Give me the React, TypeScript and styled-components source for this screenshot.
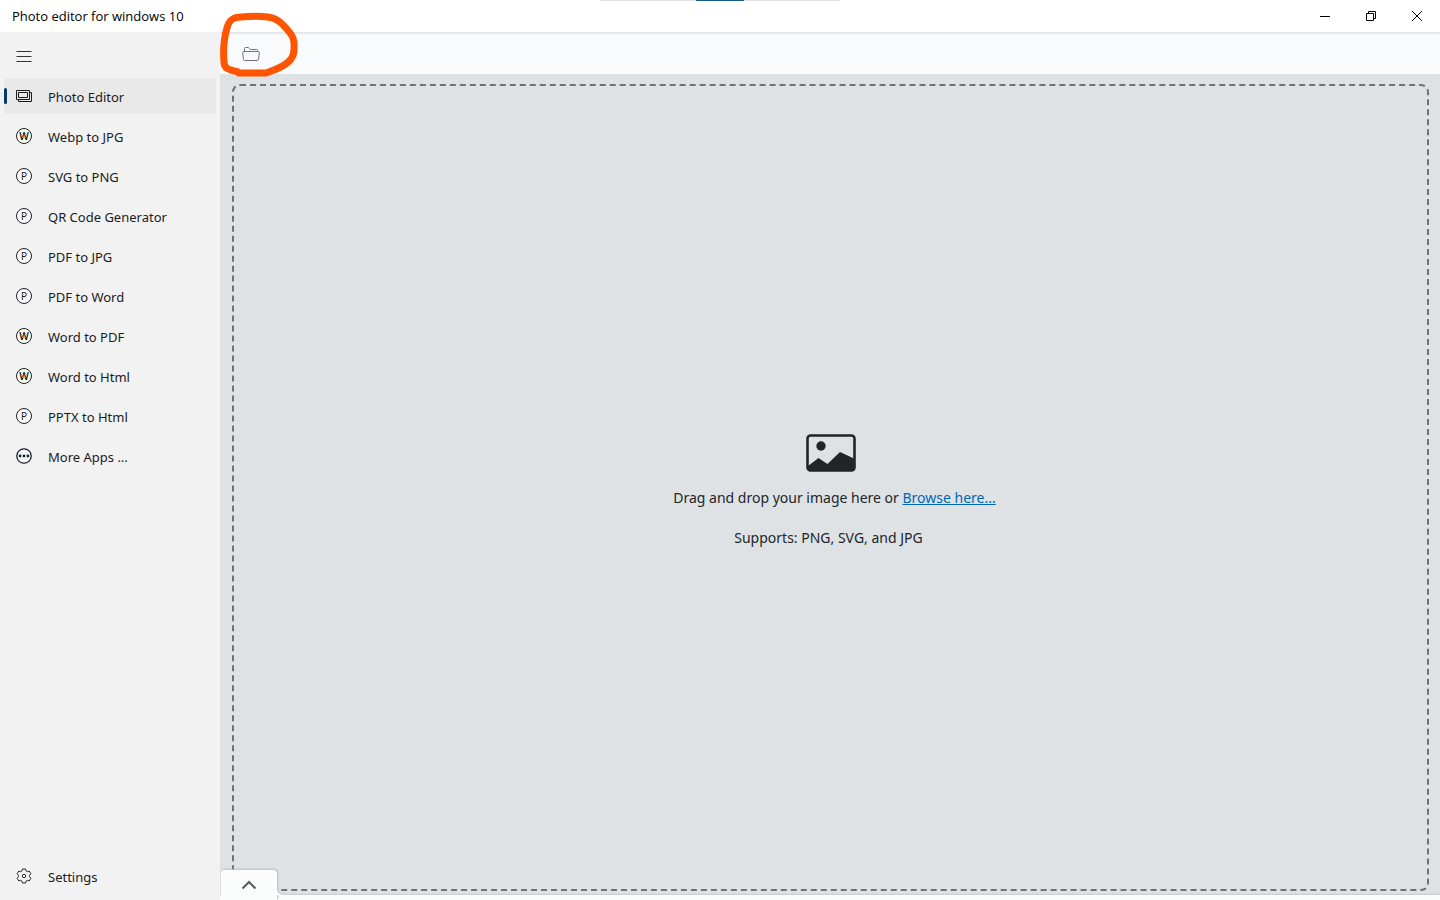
import React from "react";
import styled, { createGlobalStyle, css } from "styled-components";

const GlobalStyle = createGlobalStyle`
  *, *::before, *::after { box-sizing: border-box; }
  body {
    margin: 0;
    background: #ffffff;
    color: #1b1b1b;
    font-family: "Segoe UI", "Noto Sans", "Open Sans", sans-serif;
    font-size: 13px;
  }
  button { font: inherit; color: inherit; border: 0; padding: 0; background: transparent; cursor: pointer; }
  svg { display: block; }
`;

const Window = styled.div`
  position: relative;
  display: flex;
  flex-direction: column;
  min-height: 100vh;
`;

const TitleBar = styled.header`
  display: flex;
  align-items: center;
  justify-content: space-between;
  height: 32px;
  padding-left: 12px;
`;

const Title = styled.h1`
  margin: 0;
  font-family: "Segoe UI", "Open Sans", sans-serif;
  font-size: 13px;
  line-height: 16px;
  font-weight: 400;
  color: #000000;
`;

const WindowButtons = styled.div`
  display: flex;
`;

const WindowButton = styled.button`
  display: flex;
  align-items: center;
  justify-content: center;
  width: 46px;
  height: 32px;
`;

const DragHandle = styled.div`
  position: absolute;
  top: 0;
  left: 50%;
  width: 240px;
  height: 1px;
  margin-left: -120px;
  background: linear-gradient(90deg, #e4e4e4 96px, #145b8c 96px, #145b8c 144px, #e4e4e4 144px);
`;

const Body = styled.div`
  display: flex;
  flex: 1;
`;

const Sidebar = styled.nav`
  display: flex;
  flex-direction: column;
  flex: none;
  width: 220px;
  padding: 4px 4px 6px;
  background: #f2f2f2;
`;

const MenuButton = styled.button`
  display: flex;
  align-items: center;
  justify-content: center;
  width: 40px;
  height: 40px;
  margin-bottom: 2px;
`;

const NavList = styled.ul`
  display: flex;
  flex-direction: column;
  gap: 4px;
  margin: 0;
  padding: 0;
  list-style: none;
`;

const NavSpacer = styled.div`
  flex: 1;
`;

const NavButton = styled.button<{ $active?: boolean }>`
  position: relative;
  display: flex;
  align-items: center;
  gap: 16px;
  width: 100%;
  height: 36px;
  padding: 0 12px;
  border-radius: 4px;
  line-height: 20px;
  text-align: left;
  ${({ $active }) =>
    $active &&
    css`
      background: #e9e9e9;
      &::before {
        content: "";
        position: absolute;
        left: 0;
        top: 10px;
        width: 3px;
        height: 16px;
        border-radius: 2px;
        background: #003e6e;
      }
    `}
`;

const NavLabel = styled.span`
  padding-top: 2px;
`;

const NavIcon = styled.span`
  display: flex;
  align-items: center;
  justify-content: center;
  width: 16px;
  height: 16px;
`;

const LetterBadge = styled.span<{ $strong?: boolean }>`
  display: flex;
  align-items: center;
  justify-content: center;
  width: 16px;
  height: 16px;
  border: 1px solid #222222;
  border-radius: 50%;
  background: ${({ $strong }) => ($strong ? "#fbfbef" : "#fafafa")};
  font-size: 10px;
  line-height: 14px;
  font-weight: ${({ $strong }) => ($strong ? 600 : 400)};
`;

const Main = styled.main`
  position: relative;
  display: flex;
  flex-direction: column;
  flex: 1;
  min-width: 0;
  border-top: 2px solid #e6e8eb;
  border-bottom: 5px solid #fbfcfc;
`;

const Toolbar = styled.div`
  display: flex;
  align-items: center;
  height: 40px;
  padding-left: 20px;
  background: #f8fafc;
`;

const ToolButton = styled.button`
  display: flex;
  align-items: center;
  justify-content: center;
  width: 22px;
  height: 24px;
`;

const Canvas = styled.section`
  display: flex;
  flex: 1;
  padding: 10px 11px 4px 12px;
  background: #dee2e5;
  box-shadow: inset 0 -2px 2px -1px #c6cbcf;
`;

const DropZone = styled.div`
  display: flex;
  flex: 1;
  flex-direction: column;
  align-items: center;
  justify-content: center;
  padding-top: 8px;
  border: 2px dashed #6c7276;
  border-radius: 8px;
  color: #212529;
  font-size: 14px;
  line-height: 24px;
`;

const DropText = styled.p`
  margin: 14px 0 0;
  padding-left: 8px;
`;

const SupportText = styled.p`
  margin: 16px 4px 0 0;
`;

const BrowseLink = styled.a`
  color: #0067b8;
  text-decoration: underline;
`;

const PanelToggle = styled.button`
  position: absolute;
  left: 1px;
  bottom: -5px;
  display: flex;
  align-items: center;
  justify-content: center;
  width: 56px;
  height: 30px;
  border-radius: 4px 4px 0 0;
  background: #fbfcfc;
  box-shadow: 1px -1px 2px #b9bec2;

  &::after {
    content: "";
    position: absolute;
    left: 100%;
    bottom: 5px;
    width: 5px;
    height: 5px;
    background: radial-gradient(circle at top right, transparent 3px, #b9bec2 4px, #fbfcfc 5px);
  }
`;

const Annotation = styled.svg`
  position: absolute;
  left: 216px;
  top: 10px;
  pointer-events: none;
`;

const FramesIcon = () => (
  <svg width="16" height="16" viewBox="0 0 16 16" fill="none" stroke="#1b1b1b">
    <path d="M.5 2.500h13v9H.5zM2.500 4.500h9v5h-9zM13.500 4.500h2v9h-13v-2" />
  </svg>
);

const MoreIcon = () => (
  <svg width="16" height="16" viewBox="0 0 16 16" fill="none">
    <circle cx="8" cy="8" r="7.2" fill="#f8fbfd" stroke="#15212b" strokeWidth="1.3" />
    <circle cx="4.1" cy="8" r="1.4" fill="#15212b" />
    <circle cx="8" cy="8" r="1.4" fill="#15212b" />
    <circle cx="11.9" cy="8" r="1.4" fill="#15212b" />
  </svg>
);

const GearIcon = () => (
  <svg width="16" height="16" viewBox="0 0 16 16" fill="none" stroke="#2a2a2a" strokeLinejoin="round">
    <path d="M6.400 1h3.200l.5 2 1.200.7 2-.6 1.600 2.700-1.400 1.500v1.400l1.400 1.500-1.600 2.700-2-.6-1.200.7-.5 2H6.400l-.5-2-1.200-.7-2 .6-1.600-2.700 1.400-1.500V7.300L1.100 5.800l1.600-2.700 2 .6L5.900 3z" />
    <circle cx="8" cy="8" r="1.7" />
  </svg>
);

const MenuIcon = () => (
  <svg width="16" height="12" viewBox="0 0 16 12" stroke="#333333">
    <path d="M.5 1.500h15M.5 6.500h15M.5 11.500h15" />
  </svg>
);

const FolderIcon = () => (
  <svg width="18" height="16" viewBox="0 0 18 16" fill="none" stroke="#6b7482" strokeLinejoin="round">
    <path d="M2.500 6V2.500Q2.500 1.500 3.500 1.500H6.500L8.500 3.500H14.500Q15.500 3.500 15.500 4.500V6" />
    <path d="M2 5.500h14q1.400 0 1.300 1.300l-.7 6.400q-.2 1.300-1.500 1.300H2.900q-1.300 0-1.500-1.300L.7 6.800Q.6 5.500 2 5.500z" />
  </svg>
);

const PictureIcon = () => (
  <svg width="50" height="38" viewBox="0 0 50 38">
    <rect x="1.500" y="1.500" width="47" height="35" rx="3" fill="none" stroke="#212529" strokeWidth="2.600" />
    <circle cx="15" cy="12" r="4.700" fill="#212529" />
    <path d="M2 32L12.500 24L21.500 30L34 18L48 24.500V34Q48 36.500 45.500 36.500H4.500Q2 36.500 2 34z" fill="#212529" />
  </svg>
);

const CaretIcon = () => (
  <svg width="16" height="10" viewBox="0 0 16 10" fill="none" stroke="#5c6063" strokeWidth="2.200">
    <path d="M1.500 8.500L8 2L14.500 8.500" />
  </svg>
);

const MinimizeIcon = () => (
  <svg width="10" height="10" viewBox="0 0 10 10" stroke="#000">
    <path d="M0 5.500h10" />
  </svg>
);

const RestoreIcon = () => (
  <svg width="10" height="10" viewBox="0 0 10 10" fill="none" stroke="#000">
    <path d="M.5 2.500h7v7h-7zM2.500 2.500v-2h7v7h-2" />
  </svg>
);

const CloseIcon = () => (
  <svg width="10" height="10" viewBox="0 0 10 10" stroke="#000">
    <path d="M0 0L10 10M10 0L0 10" />
  </svg>
);

type IconKind = "frames" | "W" | "P" | "more" | "gear";

const items: { label: string; icon: IconKind }[] = [
  { label: "Photo Editor", icon: "frames" },
  { label: "Webp to JPG", icon: "W" },
  { label: "SVG to PNG", icon: "P" },
  { label: "QR Code Generator", icon: "P" },
  { label: "PDF to JPG", icon: "P" },
  { label: "PDF to Word", icon: "P" },
  { label: "Word to PDF", icon: "W" },
  { label: "Word to Html", icon: "W" },
  { label: "PPTX to Html", icon: "P" },
  { label: "More Apps ...", icon: "more" },
];

function renderIcon(kind: IconKind) {
  if (kind === "frames") return <FramesIcon />;
  if (kind === "more") return <MoreIcon />;
  if (kind === "gear") return <GearIcon />;
  return <LetterBadge $strong={kind === "W"}>{kind}</LetterBadge>;
}

function NavItem({ label, icon, active }: { label: string; icon: IconKind; active?: boolean }) {
  return (
    <li>
      <NavButton type="button" $active={active} aria-current={active ? "page" : undefined}>
        <NavIcon aria-hidden="true">{renderIcon(icon)}</NavIcon>
        <NavLabel>{label}</NavLabel>
      </NavButton>
    </li>
  );
}

export default function App() {
  return (
    <>
      <GlobalStyle />
      <Window>
        <DragHandle />
        <TitleBar>
          <Title>Photo editor for windows 10</Title>
          <WindowButtons>
            <WindowButton type="button" aria-label="Minimize"><MinimizeIcon /></WindowButton>
            <WindowButton type="button" aria-label="Restore"><RestoreIcon /></WindowButton>
            <WindowButton type="button" aria-label="Close"><CloseIcon /></WindowButton>
          </WindowButtons>
        </TitleBar>
        <Body>
          <Sidebar>
            <MenuButton type="button" aria-label="Toggle navigation"><MenuIcon /></MenuButton>
            <NavList>
              {items.map((item, index) => (
                <NavItem key={item.label} label={item.label} icon={item.icon} active={index === 0} />
              ))}
            </NavList>
            <NavSpacer />
            <NavList>
              <NavItem label="Settings" icon="gear" />
            </NavList>
          </Sidebar>
          <Main>
            <Toolbar>
              <ToolButton type="button" aria-label="Open file"><FolderIcon /></ToolButton>
            </Toolbar>
            <Canvas>
              <DropZone>
                <PictureIcon />
                <DropText>
                  Drag and drop your image here or <BrowseLink href="#browse">Browse here...</BrowseLink>
                </DropText>
                <SupportText>Supports: PNG, SVG, and JPG</SupportText>
              </DropZone>
            </Canvas>
            <PanelToggle type="button" aria-label="Show panel"><CaretIcon /></PanelToggle>
          </Main>
        </Body>
        <Annotation width="84" height="70" viewBox="216 10 84 70" fill="none" stroke="#ff5500" strokeWidth="7" strokeLinecap="round" strokeLinejoin="round" aria-hidden="true">
          <path d="M237 71.500C228 70 224 68 224 62C223 50 224 38 227 28C229 20 233 17 241 17C251 16 261 16 268 17C275 18 281 22 285 27C291 34 293 36 294 42C294 49 295 54 291 59C287 65 275 70 266 73H239" />
        </Annotation>
      </Window>
    </>
  );
}
